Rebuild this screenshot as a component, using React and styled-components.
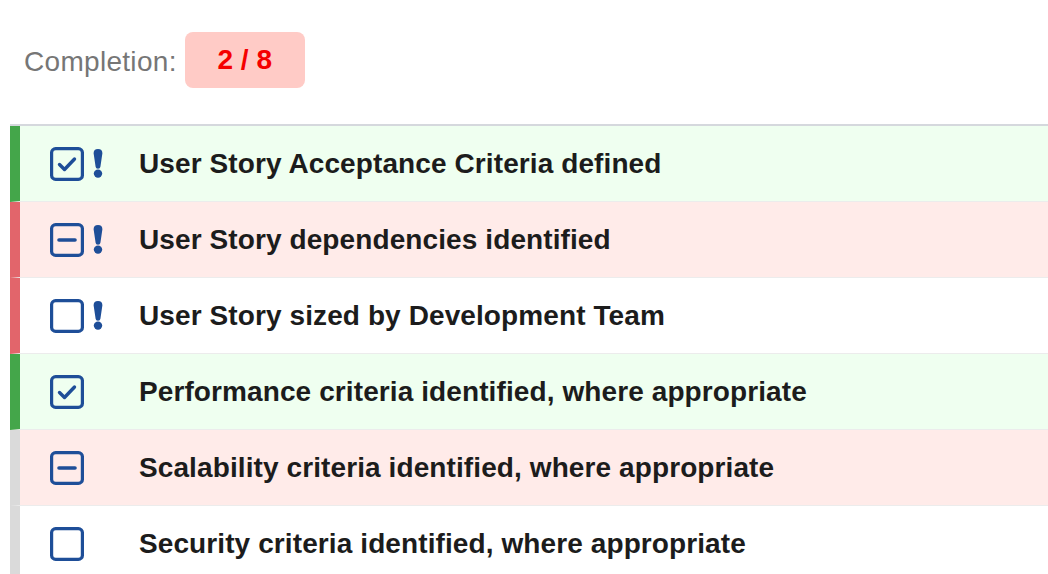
import React from 'react';
import styled, { createGlobalStyle } from 'styled-components';

const GlobalStyle = createGlobalStyle`
  body {
    margin: 0;
    background: #fff;
    font-family: "Liberation Sans", Arial, Helvetica, sans-serif;
  }
`;

const Page = styled.div`
  width: 1048px;
  height: 574px;
  overflow: hidden;
`;

const Header = styled.div`
  display: flex;
  align-items: center;
  gap: 8px;
  padding: 32px 0 36px 24px;
`;

const Label = styled.span`
  font-size: 28px;
  letter-spacing: 0.3px;
  color: #767676;
  padding-top: 4px;
`;

const Badge = styled.span`
  display: inline-flex;
  align-items: center;
  justify-content: center;
  width: 120px;
  height: 56px;
  border-radius: 8px;
  background: #ffcbc6;
  color: #f50000;
  font-size: 28px;
  font-weight: bold;
`;

const List = styled.div`
  margin-left: 10px;
  border-top: 2px solid #d5d8dd;
`;

const barColors = {
  done: '#44a64a',
  missing: '#e2656b',
  optional: '#dadada',
};

const rowBg = {
  checked: '#effff0',
  partial: '#ffebe9',
  empty: '#ffffff',
};

const Row = styled.div`
  display: flex;
  align-items: center;
  height: 75px;
  padding-left: 30px;
  border-left: 10px solid ${(props) => barColors[props.bar]};
  border-bottom: 1px solid #ececec;
  background: ${(props) => rowBg[props.state]};
`;

const Icons = styled.div`
  display: flex;
  align-items: center;
  gap: 9px;
  width: 89px;
  flex-shrink: 0;
`;

const Title = styled.span`
  font-size: 28px;
  font-weight: bold;
  letter-spacing: 0.1px;
  color: #1c1c1c;
  white-space: nowrap;
`;

const BLUE = '#1e4e98';

const CheckBox = ({ state }) => (
  <svg width="34" height="34" viewBox="0 0 34 34">
    <rect x="1.6" y="1.6" width="30.8" height="30.8" rx="4" fill="none" stroke={BLUE} strokeWidth="3.2" />
    {state === 'checked' && (
      <path d="M9.5 17.5 L14.5 22.5 L24.5 12" fill="none" stroke={BLUE} strokeWidth="3.4" strokeLinecap="round" strokeLinejoin="round" />
    )}
    {state === 'partial' && (
      <path d="M9 17 H25" stroke={BLUE} strokeWidth="3.6" strokeLinecap="round" />
    )}
  </svg>
);

const Important = () => (
  <svg width="10" height="29" viewBox="0 0 10 29">
    <path d="M0.6 4.3 Q0.6 0 5 0 Q9.4 0 9.4 4.3 L7.4 17.8 Q7.2 19.8 5 19.8 Q2.8 19.8 2.6 17.8 Z" fill={BLUE} />
    <circle cx="5" cy="24.6" r="4.2" fill={BLUE} />
  </svg>
);

const TOTAL = 8;

const items = [
  { state: 'checked', important: true, text: 'User Story Acceptance Criteria defined' },
  { state: 'partial', important: true, text: 'User Story dependencies identified' },
  { state: 'empty', important: true, text: 'User Story sized by Development Team' },
  { state: 'checked', important: false, text: 'Performance criteria identified, where appropriate' },
  { state: 'partial', important: false, text: 'Scalability criteria identified, where appropriate' },
  { state: 'empty', important: false, text: 'Security criteria identified, where appropriate' },
];

const barFor = (item) => {
  if (item.state === 'checked') return 'done';
  return item.important ? 'missing' : 'optional';
};

const App = () => {
  const done = items.filter((i) => i.state === 'checked').length;
  return (
    <Page>
      <GlobalStyle />
      <Header>
        <Label>Completion:</Label>
        <Badge>
          {done} / {TOTAL}
        </Badge>
      </Header>
      <List>
        {items.map((item) => (
          <Row key={item.text} state={item.state} bar={barFor(item)}>
            <Icons>
              <CheckBox state={item.state} />
              {item.important && <Important />}
            </Icons>
            <Title>{item.text}</Title>
          </Row>
        ))}
      </List>
    </Page>
  );
};

export default App;
